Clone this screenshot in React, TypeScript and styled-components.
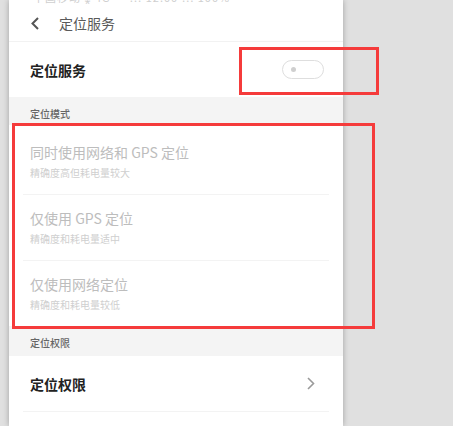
import React from "react";
import styled, { createGlobalStyle } from "styled-components";

const Global = createGlobalStyle`
  html, body { margin: 0; padding: 0; background: #e0e0e0; }
  body { font-family: "Noto Sans CJK SC", "Noto Sans", Roboto, sans-serif; }
`;

const Page = styled.div`
  position: relative;
  width: 453px;
  height: 426px;
  overflow: hidden;
  background: #e0e0e0;
`;

const Phone = styled.div`
  margin-left: 9px;
  width: 334px;
  height: 426px;
  background: #fff;
  box-shadow: 0 0 6px rgba(0, 0, 0, 0.28);
  display: flex;
  flex-direction: column;
`;

const StatusBar = styled.div`
  height: 5px;
  overflow: hidden;
  padding-left: 24px;
`;

const StatusText = styled.div`
  margin-top: -9px;
  font-size: 11px;
  line-height: 12px;
  color: #cfcfcf;
  letter-spacing: 1px;
`;

const Header = styled.div`
  height: 36px;
  display: flex;
  align-items: center;
  padding-left: 21px;
  gap: 19px;
  border-bottom: 1px solid #f2f2f2;
`;

const HeaderTitle = styled.div`
  font-size: 14px;
  color: #5a5a5a;
  line-height: 20px;
`;

const Row = styled.div<{ $h: number }>`
  height: ${(p) => p.$h}px;
  display: flex;
  align-items: center;
  justify-content: space-between;
  padding: 0 19px 0 21px;
`;

const RowLabel = styled.div`
  font-size: 14px;
  font-weight: 700;
  color: #222;
`;

const Toggle = styled.div`
  box-sizing: border-box;
  width: 42px;
  height: 19px;
  border: 1.5px solid #dedede;
  border-radius: 10px;
  display: flex;
  align-items: center;
  padding-left: 8px;
`;

const Dot = styled.div`
  width: 5px;
  height: 5px;
  border-radius: 50%;
  background: #cfcfcf;
`;

const Section = styled.div<{ $h: number; $top: number }>`
  box-sizing: border-box;
  height: ${(p) => p.$h}px;
  background: #f4f4f4;
  padding: ${(p) => p.$top}px 0 0 21px;
  font-size: 10px;
  line-height: 14px;
  color: #666;
  font-weight: 500;
`;

const List = styled.div`
  padding-top: 4px;
`;

const Item = styled.div<{ $last?: boolean }>`
  margin: 0 14px;
  padding: 13px 7px 14px;
  border-bottom: ${(p) => (p.$last ? "none" : "1px solid #f3f3f3")};
  display: flex;
  flex-direction: column;
`;

const ItemTitle = styled.div`
  font-size: 14px;
  line-height: 20px;
  color: #bdbdbd;
`;

const ItemSub = styled.div`
  margin-top: 4px;
  font-size: 10px;
  line-height: 14px;
  color: #cfcfcf;
`;

const Divider = styled.div`
  margin: 0 14px;
  height: 1px;
  background: #f3f3f3;
`;

const Mark = styled.div`
  position: absolute;
  box-sizing: border-box;
  border: 3px solid #f53b3b;
`;

const Back = () => (
  <svg width="10" height="13" viewBox="0 0 10 13">
    <path d="M8 1 L2.5 6.5 L8 12" fill="none" stroke="#555" strokeWidth="2" />
  </svg>
);

const Chevron = () => (
  <svg width="10" height="13" viewBox="0 0 10 13" style={{ marginRight: 8 }}>
    <path d="M2 1 L7.5 6.5 L2 12" fill="none" stroke="#9a9a9a" strokeWidth="1.6" />
  </svg>
);

const modes = [
  { t: "同时使用网络和 GPS 定位", s: "精确度高但耗电量较大" },
  { t: "仅使用 GPS 定位", s: "精确度和耗电量适中" },
  { t: "仅使用网络定位", s: "精确度和耗电量较低" },
];

export default function App() {
  return (
    <Page>
      <Global />
      <Phone>
        <StatusBar>
          <StatusText>中国移动 ⁎ 4G · ⋯ 12:00 ⋯ 100%</StatusText>
        </StatusBar>
        <Header>
          <Back />
          <HeaderTitle>定位服务</HeaderTitle>
        </Header>
        <Row $h={55}>
          <RowLabel>定位服务</RowLabel>
          <Toggle>
            <Dot />
          </Toggle>
        </Row>
        <Section $h={28} $top={10}>定位模式</Section>
        <List>
          {modes.map((m, i) => (
            <Item key={m.t} $last={i === modes.length - 1}>
              <ItemTitle>{m.t}</ItemTitle>
              <ItemSub>{m.s}</ItemSub>
            </Item>
          ))}
        </List>
        <Section $h={30} $top={10}>定位权限</Section>
        <Row $h={55}>
          <RowLabel>定位权限</RowLabel>
          <Chevron />
        </Row>
        <Divider />
      </Phone>
      <Mark style={{ left: 239, top: 47, width: 140, height: 48 }} />
      <Mark style={{ left: 12, top: 123, width: 363, height: 206 }} />
    </Page>
  );
}
